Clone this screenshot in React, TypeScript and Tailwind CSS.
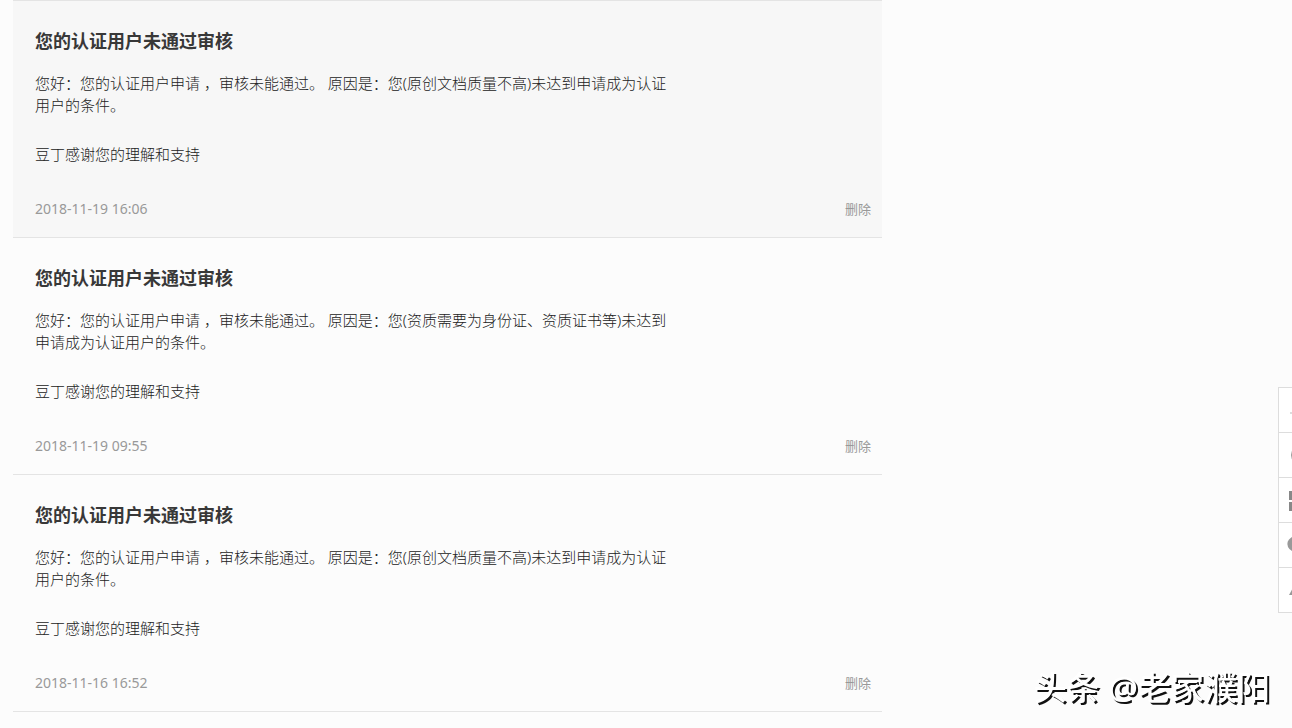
import clsx from "clsx";

const MESSAGES = [
  {
    id: 1,
    unread: true,
    reason: "原创文档质量不高",
    time: "2018-11-19 16:06",
  },
  {
    id: 2,
    unread: false,
    reason: "资质需要为身份证、资质证书等",
    time: "2018-11-19 09:55",
  },
  {
    id: 3,
    unread: false,
    reason: "原创文档质量不高",
    time: "2018-11-16 16:52",
  },
];

function MessageItem({ message }: { message: (typeof MESSAGES)[0] }) {
  return (
    <li
      className={clsx(
        "border-b border-[#e4e4e4] pt-7 pb-[18px] pl-[22px] pr-[11px]",
        message.unread && "bg-[#f7f7f7]"
      )}
    >
      <h2 className="text-[18px] leading-6 font-bold text-[#383838]">
        您的认证用户未通过审核
      </h2>
      <div className="mt-[19px] max-w-[645px] text-[15px] leading-[22px] font-light text-[#222]">
        <p>
          {`您好：您的认证用户申请 ，审核未能通过。 原因是：您(${message.reason})未达到申请成为认证用户的条件。`}
        </p>
        <p className="mt-[27px]">豆丁感谢您的理解和支持</p>
      </div>
      <div className="mt-[34px] flex items-center justify-between leading-5 text-[#999]">
        <time className="text-[14px]">{message.time}</time>
        <button type="button" className="text-[13px] cursor-pointer">
          删除
        </button>
      </div>
    </li>
  );
}

const TOOLS = [
  {
    label: "返回顶部",
    icon: <path d="M11 25h8l4-4" fill="none" stroke="#bbb" />,
  },
  {
    label: "客服",
    icon: <circle cx="22" cy="22" r="9" fill="none" stroke="#999" strokeWidth="2" />,
  },
  {
    label: "二维码",
    icon: (
      <path
        d="M10 13h9v9h-9zM22 13h9v9h-9zM10 24h9v9h-9zM22 24h9v9h-9z"
        fill="#888"
      />
    ),
  },
  {
    label: "消息",
    icon: <path d="M18 13a9 8 0 0 0-5 15v4l5-3a9 8 0 0 0 0-16z" fill="#999" />,
  },
  {
    label: "反馈",
    icon: <path d="M10 27l5-9 10-6 4 4-8 11z" fill="#999" />,
  },
];

function SideTools() {
  return (
    <nav
      aria-label="快捷工具"
      className="fixed top-[387px] -right-8 flex flex-col border border-[#ddd] bg-white divide-y divide-[#ddd]"
    >
      {TOOLS.map((tool) => (
        <button
          key={tool.label}
          type="button"
          aria-label={tool.label}
          className="size-11 box-content cursor-pointer"
        >
          <svg viewBox="0 0 44 44" className="size-11">
            {tool.icon}
          </svg>
        </button>
      ))}
    </nav>
  );
}

export default function App() {
  return (
    <div
      lang="zh-CN"
      className="min-h-screen bg-[#fcfcfc] pl-[13px] font-['Noto_Sans','Noto_Sans_CJK_SC',sans-serif]"
    >
      <main className="max-w-[869px]">
        <ul className="border-t border-[#e4e4e4]">
          {MESSAGES.map((m) => (
            <MessageItem key={m.id} message={m} />
          ))}
        </ul>
      </main>

      <SideTools />

      {/* Author signature */}
      <p className="fixed right-[22px] bottom-[18px] text-[33px] leading-[44px] font-medium text-white [text-shadow:2px_2px_0_#111]">
        头条 @老家濮阳
      </p>
    </div>
  );
}
